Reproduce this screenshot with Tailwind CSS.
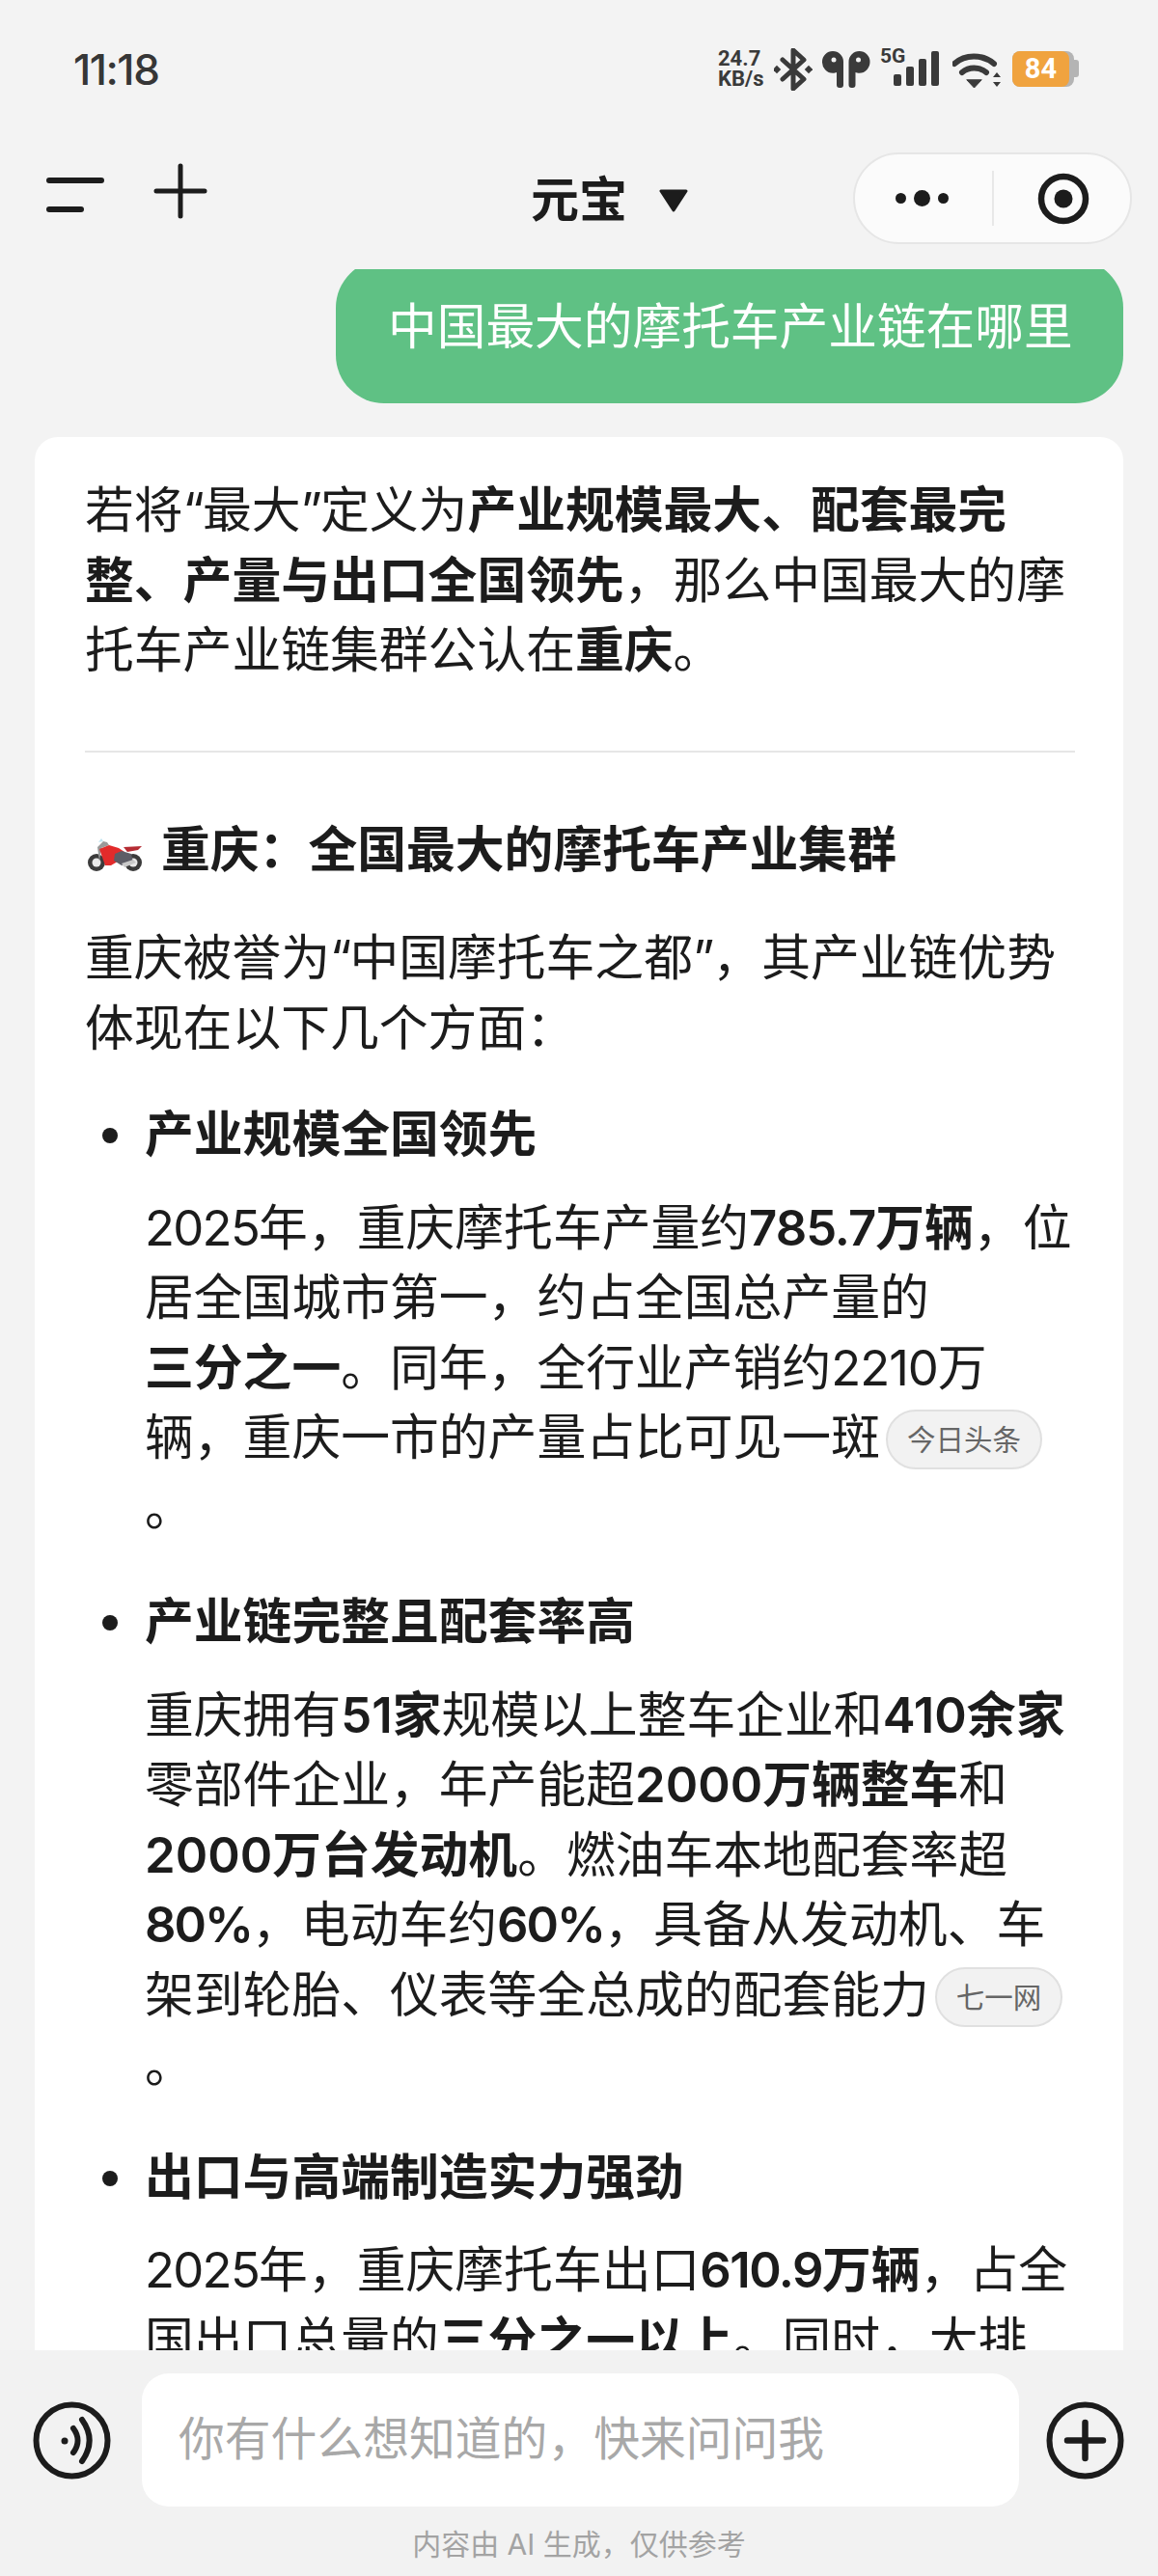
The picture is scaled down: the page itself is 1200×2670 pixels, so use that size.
<!DOCTYPE html>
<html lang="zh-CN">
<head>
  <meta charset="UTF-8" />
  <meta name="viewport" content="width=device-width, initial-scale=1.0" />
  <title>元宝</title>
  <script src="https://cdn.jsdelivr.net/npm/@tailwindcss/browser@4"></script>
</head>
<body class="bg-[#f3f3f3]">
<div class="w-[1200px] h-[2670px] flex flex-col overflow-hidden bg-[#f3f3f3] text-[#1c1c1c] font-['Inter','Noto_Sans_CJK_SC',sans-serif]">

  <!-- status bar -->
  <div class="h-[140px] shrink-0 flex items-start justify-between pt-[50px] pl-[76px] pr-[82px]">
    <span class="text-[44px] leading-[44px] font-medium text-[#363636] tracking-[-1.5px]">11:18</span>
    <div class="flex items-start h-[44px]">
      <div class="w-[48px] flex flex-col text-[#3a3a3a] font-bold text-[22px] leading-[21px] font-['Roboto',sans-serif]">
        <span>24.7</span>
        <span>KB/s</span>
      </div>
      <svg class="ml-[10px]" width="40" height="44" viewBox="0 0 40 44" fill="none" stroke="#3a3a3a" stroke-width="5" stroke-linejoin="round" stroke-linecap="round">
        <path d="M9 12l22 20-11 10V2l11 10L9 32" />
        <rect x="0" y="19" width="6" height="6" fill="#3a3a3a" stroke="none" transform="rotate(45 3 22)" />
        <rect x="33" y="19" width="6" height="6" fill="#3a3a3a" stroke="none" transform="rotate(45 36 22)" />
      </svg>
      <svg class="ml-[10px] mt-[3px]" width="50" height="38" viewBox="0 0 50 38" fill="#3a3a3a">
        <path d="M11 0a11 11 0 0 1 11 11v24a3 3 0 0 1-3 3h-1a3 3 0 0 1-3-3V22c-1 .5-2.500.8-4 .8A11.500 11.500 0 0 1 0 11 11 11 0 0 1 11 0z" />
        <path transform="translate(-2.500 0)" d="M41 0a11 11 0 0 0-11 11v24a3 3 0 0 0 3 3h1a3 3 0 0 0 3-3V22c1 .5 2.500.8 4 .8A11.500 11.500 0 0 0 52 11 11 11 0 0 0 41 0z" />
        <circle cx="12" cy="9" r="2.500" fill="#f3f3f3" />
        <circle cx="37.500" cy="9" r="2.500" fill="#f3f3f3" />
      </svg>
      <div class="relative w-[61px] h-[40px] ml-[10px] mt-[1px]">
        <span class="absolute left-0 top-[-3px] text-[#3a3a3a] font-bold text-[21px] leading-[20px] font-['Roboto',sans-serif]">5G</span>
        <div class="absolute right-[0px] bottom-[2px] flex items-end gap-[5px]">
          <span class="w-[8px] h-[12px] rounded-[2px] bg-[#3a3a3a]"></span>
          <span class="w-[8px] h-[20px] rounded-[2px] bg-[#3a3a3a]"></span>
          <span class="w-[8px] h-[28px] rounded-[2px] bg-[#3a3a3a]"></span>
          <span class="w-[8px] h-[36px] rounded-[2px] bg-[#3a3a3a]"></span>
        </div>
      </div>
      <svg class="ml-[14px] mt-[5px]" width="50" height="38" viewBox="0 0 50 38" fill="none" stroke="#3a3a3a" stroke-width="6" stroke-linecap="round">
        <path d="M2 11C13 1 31 1 43 11" />
        <path d="M10 20c7-6 18-6 25 0" />
        <path d="M15 28l7.500 8 7.500-8z" fill="#3a3a3a" stroke-width="1" stroke-linejoin="round" />
        <path d="M42 25l4-5 4 5zM42 30l4 5 4-5z" fill="#3a3a3a" stroke="none" />
      </svg>
      <div class="relative ml-[12px] mt-[3px] w-[69px] h-[37px]">
        <span class="absolute right-0 top-[9px] w-[6px] h-[18px] rounded-r-[3px] bg-[#b4b4b4]"></span>
        <span class="absolute left-0 top-0 w-[64px] h-[37px] rounded-[8px] bg-[#b4b4b4]"></span>
        <span class="absolute left-0 top-0 w-[59px] h-[37px] rounded-[8px] bg-[#f0a33f] flex items-center justify-center text-white font-bold text-[29px] leading-none font-['Roboto',sans-serif]">84</span>
      </div>
    </div>
  </div>

  <!-- nav -->
  <div class="h-[139px] shrink-0 relative flex items-start pl-[48px] pt-[32px]">
    <div class="flex flex-col gap-[24px] pt-[12px] w-[60px]">
      <span class="w-[60px] h-[6px] rounded-full bg-[#1c1c1c]"></span>
      <span class="w-[39px] h-[6px] rounded-full bg-[#1c1c1c]"></span>
    </div>
    <svg class="ml-[51px] mt-[-3px]" width="56" height="58" viewBox="0 0 56 58" stroke="#1c1c1c" stroke-width="5" stroke-linecap="round">
      <path d="M28 3v52M3 29h50" />
    </svg>
    <div class="absolute left-[550px] top-[34px] flex items-center">
      <span class="text-[50px] leading-[66px] font-bold">元宝</span>
      <svg class="ml-[33px] mt-[2px]" width="30" height="24" viewBox="0 0 30 24" fill="#1c1c1c" stroke="#1c1c1c" stroke-width="3" stroke-linejoin="round">
        <path d="M2 2h26L15 22z" />
      </svg>
    </div>
    <div class="absolute left-[884px] top-[18px] w-[289px] h-[95px] rounded-full bg-[#fbfbfb] border-2 border-[#e6e6e6] flex items-center">
      <div class="w-[142px] flex items-center justify-center gap-[8px] pr-[4px]">
        <span class="w-[11px] h-[11px] rounded-full bg-[#1c1c1c]"></span>
        <span class="w-[17px] h-[17px] rounded-full bg-[#1c1c1c]"></span>
        <span class="w-[11px] h-[11px] rounded-full bg-[#1c1c1c]"></span>
      </div>
      <span class="w-[2px] h-[57px] bg-[#e8e8e8]"></span>
      <div class="flex-1 flex items-center justify-center pl-[2px]">
        <svg width="54" height="54" viewBox="0 0 54 54" fill="none" stroke="#1c1c1c" stroke-width="6.500">
          <circle cx="27" cy="27" r="23" />
          <circle cx="27" cy="27" r="9.500" fill="#1c1c1c" stroke="none" />
        </svg>
      </div>
    </div>
  </div>

  <!-- conversation -->
  <div class="flex-1 min-h-0 overflow-hidden">
    <div class="flex justify-end pr-[36px] mt-[-10px]">
      <div class="w-[816px] h-[149px] rounded-[50px] bg-[#5fc184] text-white text-[50.700px] leading-[149px] pl-[54px] whitespace-nowrap"><span class="relative top-[-5px]">中国最大的摩托车产业链在哪里</span></div>
    </div>

    <div class="mt-[35px] mx-[36px] bg-white rounded-t-[24px] pt-[40px] pl-[52px] text-[50.800px] leading-[72.500px] whitespace-nowrap">
      <p>若将<span class="tracking-[-2px]">“</span>最大<span class="tracking-[-2px]">”</span>定义为<strong class="font-semibold">产业规模最大、配套最完</strong><br><strong class="font-semibold">整、产量与出口全国领先</strong>&#65292;那么中国最大的摩<br>托车产业链集群公认在<strong class="font-semibold">重庆</strong>。</p>

      <div class="h-[2px] w-[1026px] bg-[#e6e6e6] mt-[67px]"></div>

      <h2 class="mt-[65px] font-semibold flex items-center">
        <svg class="ml-[2px] mt-[10px] mr-[17px]" width="60" height="38" viewBox="0 0 60 38">
          <circle cx="10" cy="27" r="9" fill="#3b3b3b" />
          <circle cx="10" cy="27" r="4.500" fill="#e9e9e9" />
          <circle cx="48" cy="27" r="9" fill="#3b3b3b" />
          <circle cx="48" cy="27" r="4.500" fill="#e9e9e9" />
          <path d="M13 26L11 11l6-6 4 1 2 3-8 3z" fill="#9a9a9a" />
          <path d="M12 6l5-1-2-3z" fill="#bfe4f2" />
          <path d="M13 13l10-4 10 3 6 4-2 7-12 7H19z" fill="#e22b2b" />
          <path d="M29 18l7-3 10 3 2 9-12 3-8-5z" fill="#5d5d66" />
          <path d="M38 11l19-1-4 4-11 2z" fill="#b52c33" />
          <path d="M36 28l12-4 3 3-12 5z" fill="#c9c9c9" />
        </svg>
        <span>重庆&#65306;全国最大的摩托车产业集群</span>
      </h2>

      <p class="mt-[40px]">重庆被誉为<span class="tracking-[-2px]">“</span>中国摩托车之都<span class="tracking-[-2px]">”</span>&#65292;其产业链优势<br>体现在以下几个方面&#65306;</p>

      <ul class="mt-[38px] ml-[62px]">
        <li class="relative">
          <span class="absolute left-[-44px] top-[29px] w-[16px] h-[16px] rounded-full bg-[#1c1c1c]"></span>
          <h3 class="font-semibold">产业规模全国领先</h3>
          <p class="mt-[24px]"><span class="tracking-[-1.7px]">2025</span>年&#65292;重庆摩托车产量约<strong class="font-semibold"><span class="tracking-[-1px]">785.7</span>万辆</strong>&#65292;位<br>居全国城市第一&#65292;约占全国总产量的<br><strong class="font-semibold">三分之一</strong>。同年&#65292;全行业产销约<span class="tracking-[-1px]">2210</span>万<br>辆&#65292;重庆一市的产量占比可见一斑<span class="inline-block align-[5px] ml-[6px] h-[62px] px-[20px] rounded-full bg-[#f2f2f2] border-2 border-[#e0e0e0] text-[#666666] text-[29.500px] leading-[58px]">今日头条</span><br>。</p>
        </li>
        <li class="relative mt-[46px]">
          <span class="absolute left-[-44px] top-[29px] w-[16px] h-[16px] rounded-full bg-[#1c1c1c]"></span>
          <h3 class="font-semibold">产业链完整且配套率高</h3>
          <p class="mt-[24px]">重庆拥有<strong class="font-semibold">51家</strong>规模以上整车企业和<strong class="font-semibold">410余家</strong><br>零部件企业&#65292;年产能超<strong class="font-semibold">2000万辆整车</strong>和<br><strong class="font-semibold">2000万台发动机</strong>。燃油车本地配套率超<br><strong class="font-semibold tracking-[-2px]">80%</strong>&#65292;电动车约<strong class="font-semibold tracking-[-2px]">60%</strong>&#65292;具备从发动机、车<br>架到轮胎、仪表等全总成的配套能力<span class="inline-block align-[5px] ml-[6px] h-[62px] px-[20px] rounded-full bg-[#f2f2f2] border-2 border-[#e0e0e0] text-[#666666] text-[29.500px] leading-[58px]">七一网</span><br>。</p>
        </li>
        <li class="relative mt-[44px]">
          <span class="absolute left-[-44px] top-[29px] w-[16px] h-[16px] rounded-full bg-[#1c1c1c]"></span>
          <h3 class="font-semibold">出口与高端制造实力强劲</h3>
          <p class="mt-[24px]"><span class="tracking-[-1.7px]">2025</span>年&#65292;重庆摩托车出口<strong class="font-semibold"><span class="tracking-[-1.500px]">610.9</span>万辆</strong>&#65292;占全<br>国出口总量的<strong class="font-semibold">三分之一以上</strong>。同时&#65292;大排</p>
        </li>
      </ul>
    </div>
  </div>

  <!-- input bar -->
  <div class="h-[234px] shrink-0 bg-[#f2f2f2] pt-[24px]">
    <div class="flex items-center pl-[34px]">
      <svg width="81" height="81" viewBox="0 0 81 81" fill="none" stroke="#1c1c1c" stroke-width="6" stroke-linecap="round">
        <circle cx="40.500" cy="40.500" r="37" />
        <circle cx="33" cy="41" r="3.500" fill="#1c1c1c" stroke="none" />
        <path d="M42 28c6 8 6 17 0 25" />
        <path d="M51 19c10 14 10 29 0 43" />
      </svg>
      <div class="ml-[32px] w-[909px] h-[138px] rounded-[28px] bg-white flex items-center pl-[38px] text-[47.800px] text-[#a8a8a8] whitespace-nowrap">你有什么想知道的&#65292;快来问问我</div>
      <svg class="ml-[28px]" width="81" height="81" viewBox="0 0 81 81" fill="none" stroke="#1c1c1c" stroke-width="6" stroke-linecap="round">
        <circle cx="40.500" cy="40.500" r="37" />
        <path d="M40.500 22v37M22 40.500h37" stroke-width="6.500" />
      </svg>
    </div>
    <p class="mt-[20px] text-center text-[30px] leading-[38px] text-[#a3a3a3]">内容由 AI 生成&#65292;仅供参考</p>
  </div>
</div>
</body>
</html>
